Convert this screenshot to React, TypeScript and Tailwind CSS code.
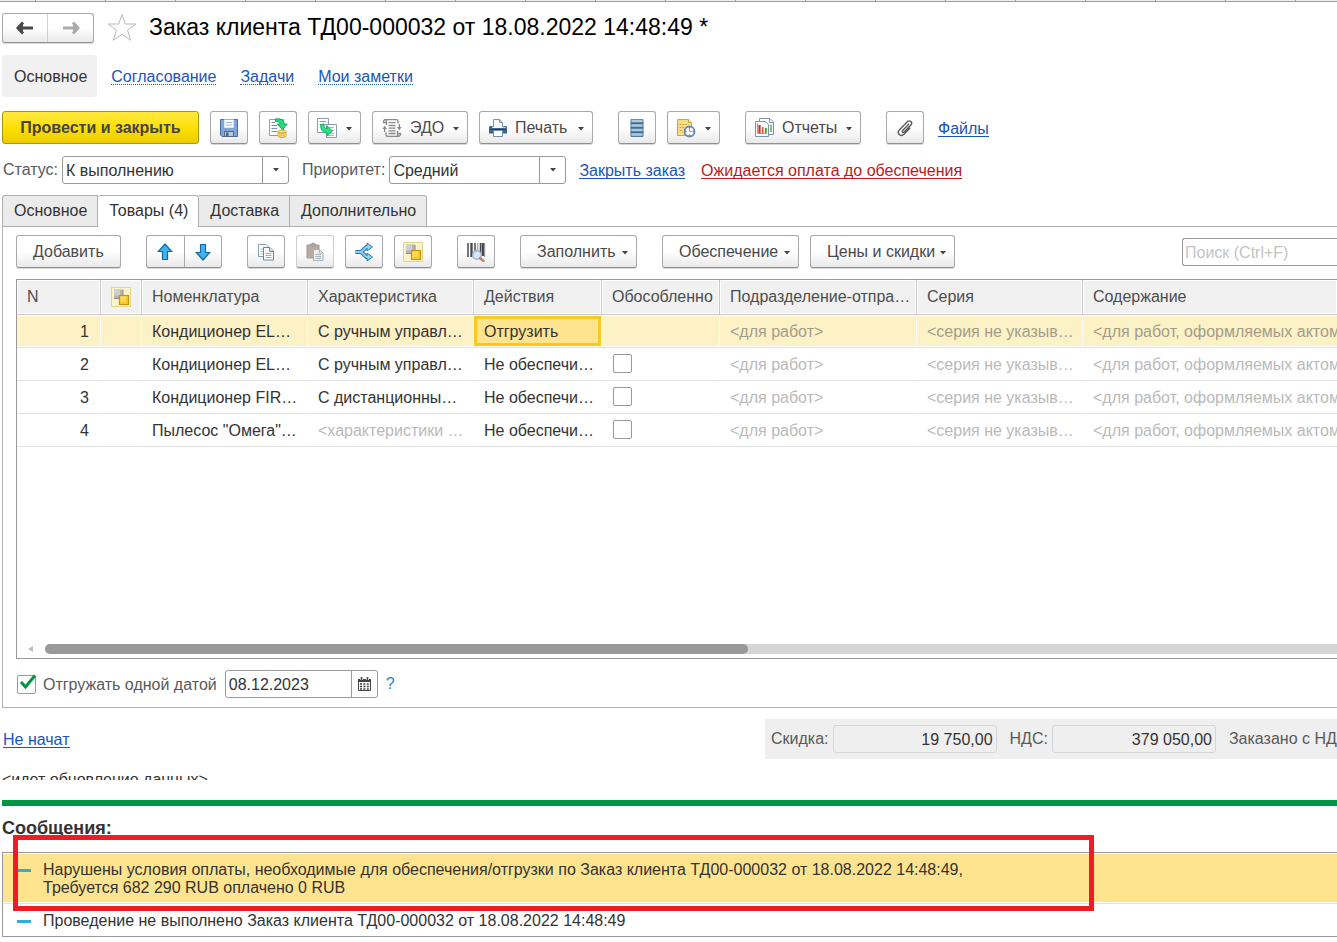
import React from 'react';
import clsx from 'clsx';

const RULER_TICKS = Array.from({ length: 32 }, (_, i) => i);

const navLinks = ['Согласование', 'Задачи', 'Мои заметки'];

const formTabs = ['Основное', 'Товары (4)', 'Доставка', 'Дополнительно'];

const columns = [
  { title: 'N', width: 'w-[84px]' },
  { title: 'Обособление', width: 'w-[41px]', icon: true },
  { title: 'Номенклатура', width: 'w-[166px]' },
  { title: 'Характеристика', width: 'w-[166px]' },
  { title: 'Действия', width: 'w-[128px]' },
  { title: 'Обособленно', width: 'w-[118px]' },
  { title: 'Подразделение-отпра…', width: 'w-[197px]' },
  { title: 'Серия', width: 'w-[166px]' },
  { title: 'Содержание', width: 'w-auto' },
];

const rows = [
  { n: 1, item: 'Кондиционер EL…', spec: 'С ручным управл…', action: 'Отгрузить', current: true },
  { n: 2, item: 'Кондиционер EL…', spec: 'С ручным управл…', action: 'Не обеспечи…' },
  { n: 3, item: 'Кондиционер FIR…', spec: 'С дистанционны…', action: 'Не обеспечи…' },
  { n: 4, item: 'Пылесос "Омега"…', spec: '<характеристики …', action: 'Не обеспечи…', noSpec: true },
];

/* ---------- icons ---------- */

const ArrowIcon: React.FC<{ color: string; flip?: boolean }> = ({ color, flip }) => (
  <svg width="18" height="14" viewBox="0 0 18 14" className={flip ? 'rotate-180' : ''}>
    <path d="M7 1.5 2 7l5 5.5M2.500 7H17" fill="none" stroke={color} strokeWidth="3" />
    <path d="M0.500 7 7 0.800V13.200Z" fill={color} />
  </svg>
);

const StarIcon = () => (
  <svg width="30" height="29" viewBox="0 0 30 29">
    <path
      d="M15 1.500 18.300 11H28.800L20.500 17.200 23.700 27.300 15 21.200 6.300 27.300 9.500 17.200 1.200 11H11.700Z"
      fill="#fff"
      stroke="#b4b9c0"
    />
  </svg>
);

const SaveIcon = () => (
  <svg width="18" height="18" viewBox="0 0 18 18">
    <path d="M0.500 0.500H17.500V17.500H2L0.500 16Z" fill="#7ea6d8" stroke="#466f9f" />
    <path d="M4 0.500H14V9H4Z" fill="#fff" stroke="#8fb0d6" strokeWidth="0.600" />
    <path d="M5.500 3.500H12.500M5.500 6H12.500" stroke="#9bb8d8" />
    <path d="M4.500 12.500H13.500V17.500H4.500Z" fill="#c3c8cd" stroke="#4f6a88" />
    <path d="M6 13.500H8.500V17H6Z" fill="#3f6893" />
  </svg>
);

const PostIcon = () => (
  <svg width="20" height="20" viewBox="0 0 20 20">
    <path d="M1.500 1.500H15.500V17.500H1.500Z" fill="#fff" stroke="#8c9db0" />
    <path d="M3.500 4.500H7M3.500 7.500H9M3.500 10.500H9M3.500 13.500H9" stroke="#7c91a8" />
    <path d="M7.500 0.800C13 0.300 16 2 16.200 6H19.200L14.600 11.800 9.300 6H12.200C12 4.300 10.500 3.500 7.500 3.600Z" fill="#23db7b" stroke="#12924f" strokeWidth="0.800" />
    <path d="M10 13.500V18C10 20 18 20 18 18V13.500Z" fill="#efbf3d" stroke="#c08f1a" strokeWidth="0.700" />
    <ellipse cx="14" cy="13.500" rx="4" ry="1.500" fill="#fbe58c" stroke="#c08f1a" strokeWidth="0.700" />
    <path d="M10 15.500C11 17 17 17 18 15.500M10 17.300C11 18.800 17 18.800 18 17.300" fill="none" stroke="#fbe58c" strokeWidth="0.800" />
  </svg>
);

const CreateBasedIcon = () => (
  <svg width="20" height="20" viewBox="0 0 20 20">
    <path d="M0.500 0.500H11.500V14.500H0.500Z" fill="#fff" stroke="#8c9db0" />
    <path d="M2.500 3.500H9M2.500 6.500H9" stroke="#8c9db0" />
    <path d="M9.500 6.500H19.500V19.500H9.500Z" fill="#fff" stroke="#8c9db0" />
    <path d="M12 9.500H17M13 12.500H17M13 15.500H17M11 17.500H17" stroke="#a9b9ca" />
    <path d="M3.500 6.500 7 6C7 9 7.500 10.500 10 10.800V7.800L15.500 13 10 18V14.900C5.500 14.800 3.500 11.500 3.500 6.500Z" fill="#2ae285" stroke="#159a58" strokeWidth="0.800" />
  </svg>
);

const EdoIcon = () => (
  <svg width="20" height="18" viewBox="0 0 20 18" fill="none" stroke="#8a8a8a" strokeWidth="1.300">
    <path d="M4.500 6V2.500C4.500 1 3.500 0.700 2.500 0.700H14.500C15.500 0.700 16 1.500 16 2.500V4.500M4 3.500H1.500C1.500 1.500 2 0.700 3.500 0.700" />
    <path d="M15.500 12V15.500C15.500 17 17 17.300 17.500 17.300H5.500C4.500 17.300 4 16.500 4 15.500V13.500M16 14.500H18.500C18.500 16.500 18 17.300 16.500 17.300" />
    <path d="M6.500 3.700H13.500M6.500 6.500H13.500M6.500 9.200H13.500M6.500 11.900H13.500M6.500 14.500H13.500" />
    <path d="M2.700 13V9.500M17.300 5V8.500" />
    <path d="M0.300 10 2.700 6.800 5.100 10ZM14.900 8H19.700L17.300 11.200Z" fill="#8a8a8a" stroke="none" />
  </svg>
);

const PrinterIcon = () => (
  <svg width="18" height="18" viewBox="0 0 18 18">
    <path d="M4.500 8V0.500H10.500L13.500 3.500V8" fill="#fff" stroke="#7d94ad" />
    <path d="M10.500 0.500V3.500H13.500" fill="none" stroke="#7d94ad" />
    <path d="M0 8.500C0 7.500 0.500 7 1.500 7H3.500V9H14.500V7H16.500C17.500 7 18 7.500 18 8.500V14.500H0Z" fill="#3f668c" />
    <path d="M1.500 10.500H16.500" stroke="#23405e" />
    <path d="M4.500 11.500H13.500V17.500H4.500Z" fill="#fff" stroke="#6f8ba8" />
    <path d="M15 8.500H16.500" stroke="#d5e4f2" />
  </svg>
);

const RegistryIcon = () => (
  <svg width="14" height="18" viewBox="0 0 14 18">
    <rect x="0.500" y="0" width="13" height="18" rx="1" fill="#547a9c" />
    <path d="M1.500 2H12.500M1.500 6.500H12.500M1.500 11H12.500M1.500 15.500H12.500" stroke="#a9cbe6" strokeWidth="2.400" />
    <path d="M0.500 4.300H13.500M0.500 8.800H13.500M0.500 13.300H13.500" stroke="#3d6282" strokeWidth="0.800" />
  </svg>
);

const ScheduleIcon = () => (
  <svg width="20" height="20" viewBox="0 0 20 20">
    <path d="M1.500 1.500H12.500L15.500 4.500V17.500H1.500Z" fill="#f7dc83" stroke="#c9a544" />
    <path d="M12.500 1.500V4.500H15.500" fill="#fff3c4" stroke="#c9a544" />
    <path d="M3.500 6.500H11M3.500 9.500H8M3.500 12.500H6" stroke="#c9a544" strokeDasharray="2 1" />
    <circle cx="13.500" cy="13.500" r="5" fill="#fff" stroke="#5f8cbf" strokeWidth="1.800" />
    <path d="M13.500 10V13.500H16" fill="none" stroke="#7fa5d0" />
    <path d="M13.500 9.300V10.500M13.500 16.500V17.700M9.300 13.500H10.500M16.500 13.500H17.700" stroke="#d63b30" strokeWidth="1.300" />
  </svg>
);

const ReportsIcon = () => (
  <svg width="20" height="20" viewBox="0 0 20 20">
    <path d="M5.500 0.500H16L19.500 4V16.500H5.500Z" fill="#fff" stroke="#7d94a8" />
    <path d="M15.500 0.500V4.500H19.500" fill="none" stroke="#7d94a8" />
    <path d="M17 6.500V14" stroke="#5bb04b" strokeWidth="1.500" />
    <path d="M1.500 3.500H11L14.500 6.500V18.500H1.500Z" fill="#fff" stroke="#7d94a8" />
    <path d="M5.500 7V15" stroke="#d92e25" strokeWidth="2.200" />
    <path d="M8.700 9V15" stroke="#e8553f" strokeWidth="1.600" />
    <path d="M11.800 10V15" stroke="#46a53a" strokeWidth="2" />
    <path d="M3.500 5V15.500H13" fill="none" stroke="#8fa3b5" />
  </svg>
);

const ClipIcon = () => (
  <svg width="18" height="18" viewBox="0 0 18 18" fill="none" stroke="#5a5a5a" strokeWidth="1.400" strokeLinecap="round">
    <path d="M12.800 5.200 6.600 11.600C5.500 12.800 7 14.200 8.100 13.100L14.800 6.200C17.200 3.700 13.800 0.200 11.300 2.700L3.500 10.700C0.200 14.200 4.500 18.700 8 15.300L13.800 9.300" />
  </svg>
);

const BlueArrow: React.FC<{ down?: boolean }> = ({ down }) => (
  <svg width="16" height="18" viewBox="0 0 16 18" className={down ? 'rotate-180' : ''}>
    <path d="M8 1 14.800 8.500H10.500V16.500H5.500V8.500H1.200Z" fill="#3fb2f2" stroke="#14699f" strokeWidth="1.200" />
  </svg>
);

const CopyIcon = () => (
  <svg width="18" height="18" viewBox="0 0 18 18">
    <path d="M1.500 1.500H9L11.500 4V13.500H1.500Z" fill="#fff" stroke="#7f9fb5" />
    <path d="M3.500 6H9M3.500 8.500H9M3.500 11H9" stroke="#a9c0d0" />
    <path d="M6.500 4.500H13L16.500 8V17H6.500Z" fill="#fff" stroke="#5f8aa5" />
    <path d="M12.500 4.500V8.500H16.500" fill="#d4e7f2" stroke="#5f8aa5" />
    <path d="M8.500 10.500H14.500M8.500 12.500H14.500M8.500 14.500H14.500" stroke="#8fb0c5" />
  </svg>
);

const PasteIcon = () => (
  <svg width="18" height="19" viewBox="0 0 18 19">
    <path d="M1 3H13V16H1Z" fill="#b9aba3" stroke="#a5968e" />
    <path d="M4 1.500H5.500C6 0 8 0 8.500 1.500H10V4.500H4Z" fill="#a3a3a3" />
    <path d="M7.500 7.500H13.500L17 11V18.500H7.500Z" fill="#eceff1" stroke="#a9b3bb" />
    <path d="M13.500 7.500V11H17M9.500 12.500H15M9.500 14.500H15M9.500 16.500H15" fill="none" stroke="#a9b3bb" />
  </svg>
);

const SplitIcon = () => (
  <svg width="20" height="20" viewBox="0 0 20 20">
    <path d="M1.500 10H7L12.500 5H15M7 10 12.500 15H15" fill="none" stroke="#206f9d" strokeWidth="3.800" />
    <path d="M13 1 18.500 5 13 9ZM13 11 18.500 15 13 19Z" fill="#8fd3fa" stroke="#206f9d" strokeWidth="0.900" />
    <path d="M2 10H7L12.500 5H14.500M7 10 12.500 15H14.500" fill="none" stroke="#8fd3fa" strokeWidth="1.900" />
  </svg>
);

const ReserveIcon = () => (
  <svg width="20" height="20" viewBox="0 0 20 20">
    <path d="M0.500 0.500H19.500V19.500H0.500Z" fill="#fdf3c8" stroke="#e3d48c" />
    <path d="M3 2.500H12V8H8.500V11.500H3Z" fill="#b5b5b5" />
    <path d="M3 2.500H9V8.500H3Z" fill="#cfcfcf" />
    <path d="M12 3V8M3 11.500H8" stroke="#8e8e8e" />
    <path d="M8.500 8.500H17.500V17.500H8.500Z" fill="#f8c92d" stroke="#c7930b" strokeWidth="1.200" />
    <path d="M9.500 9.500H15V15H9.500Z" fill="#fddc5c" />
  </svg>
);

const BarcodeIcon = () => (
  <svg width="20" height="20" viewBox="0 0 20 20">
    <path d="M2 1V15M9 1V10M14.500 1V12" stroke="#4a4a4a" strokeWidth="1.500" />
    <path d="M5.500 1V15M16.800 1V14" stroke="#4a4a4a" strokeWidth="2.400" />
    <path d="M11.800 1V9M18.700 1V15" stroke="#8b8b8b" />
    <circle cx="11" cy="13" r="4.300" fill="#d6e6fb" stroke="#9eb3d4" strokeWidth="1.500" />
    <path d="M14.200 16.200 17.500 19" stroke="#bc8a6a" strokeWidth="2.600" strokeLinecap="round" />
  </svg>
);

const CalendarIcon = () => (
  <svg width="13" height="14" viewBox="0 0 13 14">
    <path d="M0.500 2.500H12.500V13.500H0.500Z" fill="#fff" stroke="#444" />
    <path d="M0 2H13V5H0Z" fill="#444" />
    <path d="M3.500 0V3M9.500 0V3" stroke="#fff" strokeWidth="3" />
    <path d="M3.500 0V3M9.500 0V3" stroke="#444" strokeWidth="1.600" />
    <path d="M2 7H11M2 9.500H11M2 12H11" stroke="#444" strokeWidth="1.600" strokeDasharray="2 1.400" />
  </svg>
);

const Caret = () => (
  <svg width="6" height="4" viewBox="0 0 6 4" className="shrink-0">
    <path d="M0 0H6L3 3.500Z" fill="#444" />
  </svg>
);

/* ---------- controls ---------- */

const buttonLook =
  'border border-[#a9a9a9] border-b-[#8f8f8f] bg-gradient-to-b from-white from-50% to-[#e9e9e9] shadow-[0_1px_0_#d9d9d9] text-[#4a4a4a]';

const linkLook = 'border-b pt-[2px] leading-[15px]';

interface ToolButtonProps {
  label: string;
  icon?: React.ReactNode;
  text?: boolean;
  menu?: boolean;
  disabled?: boolean;
  className?: string;
}

const ToolButton: React.FC<ToolButtonProps> = ({ label, icon, text, menu, disabled, className }) => (
  <button
    type="button"
    aria-label={label}
    disabled={disabled}
    className={clsx(
      buttonLook,
      'flex h-[33px] shrink-0 items-center rounded-[3px] whitespace-nowrap',
      text || menu ? 'pr-2' : 'justify-center',
      disabled && 'border-[#cfcfcf] from-[#f1f1f1]',
      className,
    )}
  >
    {icon}
    {text && <span className={icon ? 'ml-2' : ''}>{label}</span>}
    {menu && (
      <span className="ml-auto pt-[2px]">
        <Caret />
      </span>
    )}
  </button>
);

const SelectField: React.FC<{ id: string; label: string; value: string; className: string }> = ({
  id,
  label,
  value,
  className,
}) => (
  <div className="flex items-center">
    <label htmlFor={id} className="mr-1 text-[#595959]">
      {label}
    </label>
    <div className={clsx('relative flex h-7 rounded-[3px] border border-[#999]', className)}>
      <select id={id} defaultValue={value} className="w-full appearance-none bg-transparent pt-px pr-7 pl-[3px] outline-none">
        <option>{value}</option>
      </select>
      <span className="pointer-events-none absolute inset-y-0 right-0 flex w-[26px] items-center justify-center border-l border-[#999]">
        <Caret />
      </span>
    </div>
  </div>
);

const TotalField: React.FC<{ id: string; label: string; value: string }> = ({ id, label, value }) => (
  <>
    <label htmlFor={id} className="text-[#595959]">
      {label}
    </label>
    <input
      id={id}
      readOnly
      defaultValue={value}
      className="mr-[13px] ml-1 h-7 w-[164px] rounded-[3px] border border-[#d6d6d6] pt-px pr-[3px] text-right outline-none"
    />
  </>
);

const HeaderBar = () => (
  <header>
    <div className="flex h-[2px] overflow-hidden border-b border-[#9d9d9d] bg-[#efefef]">
      <span className="w-[35px] shrink-0" />
      {RULER_TICKS.map((i) => (
        <span key={i} className="w-[70px] shrink-0 border-l border-[#9d9d9d]" />
      ))}
    </div>
    <div className="mt-[10px] flex h-[31px] items-center pl-[2px]">
      <div className={clsx(buttonLook, 'flex h-[30px] rounded-[3px]')}>
        <button type="button" aria-label="Назад" className="flex w-[45px] items-center justify-center border-r border-[#d0d0d0]">
          <ArrowIcon color="#4a4a4a" />
        </button>
        <button type="button" aria-label="Вперед" className="flex w-[45px] items-center justify-center">
          <ArrowIcon color="#ababab" flip />
        </button>
      </div>
      <button type="button" aria-label="В избранное" className="ml-[13px]">
        <StarIcon />
      </button>
      <h1 className="ml-3 pb-[2px] text-[23px] leading-7 whitespace-nowrap text-black">
        Заказ клиента ТД00-000032 от 18.08.2022 14:48:49 *
      </h1>
    </div>
    <nav className="mt-3 flex h-[42px] items-center pl-[2px]">
      <span className="mr-[14px] flex h-full items-center rounded-[4px] bg-[#f1f1f1] pt-px pr-[10px] pl-3">Основное</span>
      {navLinks.map((link) => (
        <a key={link} href="#" className={clsx(linkLook, 'mr-6 border-dotted border-[#1a56b8] text-[#1a56b8]')}>
          {link}
        </a>
      ))}
    </nav>
  </header>
);

const CommandBar = () => (
  <div className="mt-[14px] flex h-[33px] items-start gap-[11px] pl-[2px]">
    <button
      type="button"
      className="h-[33px] w-[197px] shrink-0 rounded-[3px] border border-[#a89a00] bg-gradient-to-b from-[#ffe93a] via-[#fde000] to-[#eccb00] font-bold text-[#444]"
    >
      Провести и закрыть
    </button>
    <ToolButton label="Записать" icon={<SaveIcon />} className="w-[38px]" />
    <ToolButton label="Провести" icon={<PostIcon />} className="w-[38px]" />
    <ToolButton label="Создать на основании" icon={<CreateBasedIcon />} menu className="w-[53px] pl-2" />
    <ToolButton label="ЭДО" icon={<EdoIcon />} text menu className="w-24 pl-[9px]" />
    <ToolButton label="Печать" icon={<PrinterIcon />} text menu className="w-[114px] pl-[9px]" />
    <ToolButton label="Структура подчиненности" icon={<RegistryIcon />} className="ml-[14px] w-[38px]" />
    <ToolButton label="Напоминание" icon={<ScheduleIcon />} menu className="w-[53px] pl-2" />
    <ToolButton label="Отчеты" icon={<ReportsIcon />} text menu className="ml-[14px] w-[116px] pl-2" />
    <ToolButton label="Прикрепить" icon={<ClipIcon />} className="ml-[14px] w-[38px]" />
    <a href="#" className={clsx(linkLook, 'ml-[3px] self-center border-[#1a56b8] text-[#1a56b8]')}>
      Файлы
    </a>
  </div>
);

const StatusBar = () => (
  <div className="mt-3 flex h-7 items-center pl-[3px] whitespace-nowrap">
    <SelectField id="status" label="Статус:" value="К выполнению" className="mr-[13px] w-[227px]" />
    <SelectField id="priority" label="Приоритет:" value="Средний" className="mr-[13px] w-[177px]" />
    <a href="#" className={clsx(linkLook, 'mr-4 border-[#1a56b8] text-[#1a56b8]')}>
      Закрыть заказ
    </a>
    <a href="#" className={clsx(linkLook, 'border-[#b51c1c] text-[#b51c1c]')}>
      Ожидается оплата до обеспечения
    </a>
  </div>
);

const GoodsToolbar = () => (
  <div className="flex h-[33px] items-start gap-[11px]">
    <ToolButton label="Добавить" text className="w-[105px] pl-4" />
    <div className={clsx(buttonLook, 'ml-[14px] flex h-[33px] w-[76px] shrink-0 rounded-[3px]')}>
      <button type="button" aria-label="Переместить вверх" className="flex flex-1 items-center justify-center border-r border-[#a9a9a9]">
        <BlueArrow />
      </button>
      <button type="button" aria-label="Переместить вниз" className="flex flex-1 items-center justify-center">
        <BlueArrow down />
      </button>
    </div>
    <ToolButton label="Скопировать" icon={<CopyIcon />} className="ml-[14px] w-[38px]" />
    <ToolButton label="Вставить" icon={<PasteIcon />} disabled className="w-[38px]" />
    <ToolButton label="Разбить строку" icon={<SplitIcon />} className="w-[38px]" />
    <ToolButton label="Обособить" icon={<ReserveIcon />} className="w-[38px]" />
    <ToolButton label="Поиск по штрихкоду" icon={<BarcodeIcon />} className="ml-[14px] w-[38px]" />
    <ToolButton label="Заполнить" text menu className="ml-[14px] w-[117px] pl-4" />
    <ToolButton label="Обеспечение" text menu className="ml-[14px] w-[137px] pl-4" />
    <ToolButton label="Цены и скидки" text menu className="w-[145px] pl-4" />
    <input
      type="search"
      aria-label="Поиск"
      placeholder="Поиск (Ctrl+F)"
      className="mt-[3px] ml-auto h-7 w-[155px] rounded-l-[3px] border border-r-0 border-[#999] pt-[2px] pl-[2px] outline-none placeholder:text-[#c4c4c4]"
    />
  </div>
);

const Cell: React.FC<{ current?: boolean; muted?: boolean; className?: string; children?: React.ReactNode }> = ({
  current,
  muted,
  className,
  children,
}) => (
  <td className="h-[33px] border-r border-b border-r-transparent border-b-[#e2e2e2] bg-clip-padding p-0 last:border-r-0">
    <div
      className={clsx(
        'h-[30px] overflow-hidden pt-[7px] pl-[10px] whitespace-nowrap',
        current && 'bg-[#fdf1c6]',
        muted && (current ? 'text-[#a39d8c]' : 'text-[#bababa]'),
        className,
      )}
    >
      {children}
    </div>
  </td>
);

const GoodsTable = () => (
  <div className="mt-[11px] flex min-h-[380px] flex-col border border-r-0 border-[#999]">
    <table className="w-full table-fixed border-separate border-spacing-0">
      <thead>
        <tr>
          {columns.map((col) => (
            <th
              key={col.title}
              className={clsx(
                'h-[35px] border-r border-b border-[#c8c8c8] bg-white p-px text-left font-normal text-[#4d4d4d] last:border-r-0',
                col.width,
              )}
            >
              <div className="flex h-8 items-center bg-[#f1f1f1] pl-[9px] whitespace-nowrap">
                {col.icon ? <ReserveIcon /> : col.title}
              </div>
            </th>
          ))}
        </tr>
      </thead>
      <tbody>
        {rows.map((row) => (
          <tr key={row.n}>
            <Cell current={row.current} className="pr-[11px] text-right">
              {row.n}
            </Cell>
            <Cell current={row.current} />
            <Cell current={row.current}>{row.item}</Cell>
            <Cell current={row.current} muted={row.noSpec}>
              {row.spec}
            </Cell>
            {row.current ? (
              <td className="h-[33px] border-b border-[#e2e2e2] p-0 pr-px">
                <div className="h-[30px] border-3 border-[#f9c922] bg-[#fee48f] pt-1 pl-[7px]">{row.action}</div>
              </td>
            ) : (
              <Cell>{row.action}</Cell>
            )}
            <Cell current={row.current}>
              {!row.current && (
                <input
                  type="checkbox"
                  aria-label={`Обособленно, строка ${row.n}`}
                  className="-mt-[2px] ml-px block size-[19px] appearance-none rounded-[2px] border border-[#999] bg-white"
                />
              )}
            </Cell>
            <Cell current={row.current} muted>
              {'<для работ>'}
            </Cell>
            <Cell current={row.current} muted>
              {'<серия не указыв…'}
            </Cell>
            <Cell current={row.current} muted>
              {'<для работ, оформляемых актом'}
            </Cell>
          </tr>
        ))}
      </tbody>
    </table>
    <div className="mt-auto mb-1 flex h-[10px] items-center">
      <svg width="5" height="6" viewBox="0 0 5 6" className="mr-3 ml-[11px] shrink-0">
        <path d="M5 0V6L0 3Z" fill="#bdbdbd" />
      </svg>
      <div className="h-full flex-1 rounded-l-full bg-[#d5d5d5]">
        <div className="h-full w-[703px] rounded-full bg-[#999]" />
      </div>
    </div>
  </div>
);

const ShipmentRow = () => (
  <div className="mt-[11px] flex h-7 items-center">
    <span className="relative ml-px flex">
      <input
        id="single-date"
        type="checkbox"
        defaultChecked
        className="peer size-[19px] appearance-none rounded-[2px] border border-[#999] bg-white"
      />
      <svg width="18" height="17" viewBox="0 0 18 17" className="pointer-events-none absolute -top-px left-[2px] hidden peer-checked:block">
        <path d="M2 8 6.500 13 16 1.500" fill="none" stroke="#009646" strokeWidth="3" />
      </svg>
    </span>
    <label htmlFor="single-date" className="ml-[7px] pt-px text-[#595959]">
      Отгружать одной датой
    </label>
    <div className="ml-2 flex h-7 w-[153px] rounded-[3px] border border-[#999]">
      <input type="text" aria-label="Дата отгрузки" defaultValue="08.12.2023" className="min-w-0 flex-1 pt-px pl-[3px] outline-none" />
      <button type="button" aria-label="Выбрать дату" className="flex w-[26px] items-center justify-center border-l border-[#999]">
        <CalendarIcon />
      </button>
    </div>
    <button type="button" aria-label="Справка" className="ml-2 text-[#1c84c6]">
      ?
    </button>
  </div>
);

const Messages = () => (
  <section className="mt-5 pl-[2px]">
    <div className="h-[6px] bg-[#009646]" />
    <h2 className="mt-[10px] text-lg leading-6 font-bold">Сообщения:</h2>
    <div className="relative mt-3 border border-r-0 border-[#999]">
      <ul className="leading-[18px]">
        <li className="flex h-[51px] border-b border-[#e2e2e2] py-px">
          <div className="flex flex-1 bg-[#fee48f] pt-[7px] pl-[14px]">
            <span className="mt-2 mr-3 h-[3px] w-[14px] shrink-0 bg-[#2fabe1]" />
            <p>
              Нарушены условия оплаты, необходимые для обеспечения/отгрузки по Заказ клиента ТД00-000032 от 18.08.2022 14:48:49,
              <br />
              Требуется 682 290 RUB оплачено 0 RUB
            </p>
          </div>
        </li>
        <li className="flex h-8 pt-2 pl-[14px]">
          <span className="mt-2 mr-3 h-[3px] w-[14px] shrink-0 bg-[#2fabe1]" />
          <p>Проведение не выполнено Заказ клиента ТД00-000032 от 18.08.2022 14:48:49</p>
        </li>
      </ul>
      <div className="pointer-events-none absolute -top-[18px] left-[10px] h-[76px] w-[1081px] border-5 border-[#ef1c24]" />
    </div>
  </section>
);

const App: React.FC = () => {
  return (
    <main className="min-h-screen overflow-x-hidden bg-white font-['Liberation_Sans',Arial,sans-serif] text-base leading-[18px] text-[#333]">
      <HeaderBar />
      <CommandBar />
      <StatusBar />

      <div className="mt-[11px] pl-[2px]">
        <div role="tablist" className="flex h-[31px]">
          {formTabs.map((tab, i) => (
            <button
              key={tab}
              type="button"
              role="tab"
              aria-selected={i === 1}
              className={clsx(
                'border-t border-r border-[#b0b0b0] pr-[10px] pl-[11px] first:rounded-tl-[3px] first:border-l last:rounded-tr-[3px]',
                i === 1 ? 'relative z-10 -mb-px rounded-t-[3px] bg-white pb-px' : 'bg-[#ebebeb]',
              )}
            >
              {tab}
            </button>
          ))}
        </div>
        <div className="border-y border-l border-[#b0b0b0] pt-2 pb-[9px] pl-[13px]">
          <GoodsToolbar />
          <GoodsTable />
          <ShipmentRow />
        </div>
      </div>

      <footer className="mt-[11px] flex h-10 items-center justify-between pl-[3px]">
        <a href="#" className={clsx(linkLook, 'border-[#1a56b8] text-[#1a56b8]')}>
          Не начат
        </a>
        <div className="flex h-full w-[572px] items-center overflow-hidden bg-[#efefef] pl-[6px] whitespace-nowrap">
          <TotalField id="discount" label="Скидка:" value="19 750,00" />
          <TotalField id="vat" label="НДС:" value="379 050,00" />
          <span className="text-[#595959]">Заказано с НДС:</span>
        </div>
      </footer>
      <p className="mt-3 h-[9px] overflow-hidden pl-[2px]">{'<идет обновление данных>'}</p>

      <Messages />
    </main>
  );
};

export default App;
